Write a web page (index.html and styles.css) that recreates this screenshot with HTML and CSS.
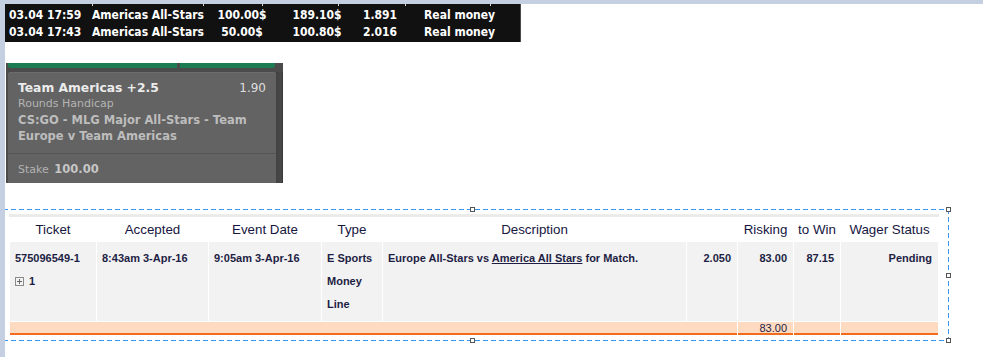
FILE: index.html
```html
<!DOCTYPE html>
<html>

<head>
  <meta charset="utf-8" />
  <title>Wager editor</title>
  <link rel="stylesheet" href="styles.css">
</head>

<body>
  <div class="editor">
    <div class="historial">
      <div class="cut"></div>
      <div class="fila">
        <span class="fecha">03.04 17:59</span>
        <span class="equipo">Americas All-Stars</span>
        <span class="monto">100.00$</span>
        <span class="ganancia">189.10$</span>
        <span class="cuota">1.891</span>
        <span class="tipo">Real money</span>
      </div>
      <div class="fila">
        <span class="fecha">03.04 17:43</span>
        <span class="equipo">Americas All-Stars</span>
        <span class="monto">50.00$</span>
        <span class="ganancia">100.80$</span>
        <span class="cuota">2.016</span>
        <span class="tipo">Real money</span>
      </div>
    </div>

    <div class="boleto">
      <div class="tabs"></div>
      <div class="boleto-body">
        <div class="card">
          <div class="card-info">
            <div class="card-titulo"><span>Team Americas +2.5</span><span class="odds">1.90</span></div>
            <div class="mercado">Rounds Handicap</div>
            <div class="evento">CS:GO - MLG Major All-Stars - Team Europe v Team Americas</div>
          </div>
          <div class="stake">Stake <b>100.00</b></div>
        </div>
        <div class="scroll"></div>
      </div>
    </div>

    <div class="seleccion">
      <span class="handle h-tl"></span>
      <span class="handle h-tm"></span>
      <span class="handle h-tr"></span>
      <span class="handle h-ml"></span>
      <span class="handle h-mr"></span>
      <span class="handle h-bl"></span>
      <span class="handle h-bm"></span>
      <span class="handle h-br"></span>
      <table class="wager">
        <colgroup>
          <col class="c-ticket">
          <col class="c-accepted">
          <col class="c-event">
          <col class="c-type">
          <col class="c-desc">
          <col class="c-odds">
          <col class="c-risk">
          <col class="c-win">
          <col class="c-status">
        </colgroup>
        <thead>
          <tr>
            <th>Ticket</th>
            <th>Accepted</th>
            <th>Event Date</th>
            <th>Type</th>
            <th>Description</th>
            <th></th>
            <th>Risking</th>
            <th>to Win</th>
            <th>Wager Status</th>
          </tr>
        </thead>
        <tbody>
          <tr class="wager-row">
            <td>575096549-1<br><svg class="expand" width="9" height="9" viewBox="0 0 9 9"><rect x="0.5" y="0.5" width="8" height="8" fill="none" stroke="#8a8a8a" /><path d="M2 4.5h5M4.5 2v5" stroke="#666" /></svg> 1</td>
            <td>8:43am 3-Apr-16</td>
            <td>9:05am 3-Apr-16</td>
            <td>E Sports Money Line</td>
            <td>Europe All-Stars vs <u>America All Stars</u> for Match.</td>
            <td class="num">2.050</td>
            <td class="num">83.00</td>
            <td class="num">87.15</td>
            <td class="num">Pending</td>
          </tr>
          <tr class="total-row">
            <td colspan="6"></td>
            <td class="num">83.00</td>
            <td></td>
            <td></td>
          </tr>
        </tbody>
      </table>
    </div>
  </div>
</body>

</html>
```

FILE: styles.css
```css
body {
  margin: 0;
  background: #fff;
}

.editor {
  box-sizing: border-box;
  height: 357px;
  border-top: 4px solid #c5cfe2;
  border-left: 5px solid #c5cfe2;
  overflow: hidden;
}

/* captura del historial */
.historial {
  width: 515px;
  height: 38px;
  background: #111;
  border-right: 1px solid #4a4a4a;
  color: #fff;
  font-family: "DejaVu Sans Condensed", "DejaVu Sans", sans-serif;
  font-stretch: condensed;
  font-weight: bold;
  font-size: 12px;
}

.cut {
  height: 3px;
  background:
    linear-gradient(#ddd, #ddd) 87px 0 / 1px 2px no-repeat,
    linear-gradient(#ddd, #ddd) 198px 0 / 1px 2px no-repeat,
    linear-gradient(#ddd, #ddd) 257px 0 / 1px 2px no-repeat,
    linear-gradient(#ddd, #ddd) 333px 0 / 1px 2px no-repeat,
    linear-gradient(#ddd, #ddd) 400px 0 / 1px 2px no-repeat,
    linear-gradient(#ddd, #ddd) 485px 0 / 1px 2px no-repeat;
}

.fila {
  display: grid;
  grid-template-columns: 87px 118px 64px 86px 40px 1fr;
  height: 17px;
  line-height: 17px;
  white-space: nowrap;
}

.fecha {
  padding-left: 4px;
}

.monto,
.ganancia,
.cuota {
  text-align: center;
}

.tipo {
  padding-left: 24px;
}

/* boleto de apuesta */
.boleto {
  width: 277px;
  height: 120px;
  margin: 21px 0 0 1px;
  background: #4b4b4b;
  display: flex;
  flex-direction: column;
  overflow: hidden;
  font-family: "DejaVu Sans", sans-serif;
}

.tabs {
  flex: 0 0 5px;
  margin: 0 8px 0 2px;
  border-radius: 0 0 3px 3px;
  background: linear-gradient(90deg, #1c7d53 0 169px, #4b4b4b 169px 172px, #1c7d53 172px);
}

.boleto-body {
  flex: 1;
  min-height: 0;
  display: flex;
  margin-top: 4px;
  padding-left: 2px;
}

.card {
  width: 268px;
  background: #636363;
  border-radius: 3px 3px 0 0;
  box-shadow: inset 0 1px 0 #6d6d6d;
}

.card-info {
  padding: 8px 10px 9px;
  border-bottom: 1px solid #545454;
  line-height: 16px;
}

.card-titulo {
  display: flex;
  justify-content: space-between;
  color: #ececec;
  font-size: 12.3px;
  font-weight: bold;
}

.odds {
  font-weight: normal;
  font-size: 12px;
  color: #dedede;
}

.mercado {
  color: #b4b4b4;
  font-size: 11px;
}

.evento {
  color: #bdbdbd;
  font-size: 11.5px;
  font-weight: bold;
}

.stake {
  padding: 7px 10px;
  line-height: 16px;
  color: #b2b2b2;
  font-size: 11px;
}

.stake b {
  color: #c6c6c6;
  font-size: 11.5px;
  margin-left: 2px;
}

.scroll {
  flex: 1;
  background: #474747;
  border-left: 3px solid #444;
  border-right: 1px solid #3a3a3a;
}

/* tabla seleccionada */
.seleccion {
  position: relative;
  width: 954px;
  margin: 26px 0 0 -10px;
  padding: 5px 0 5px 14px;
  box-sizing: border-box;
  background:
    repeating-linear-gradient(90deg, #3a95f2 0 5px, transparent 5px 8px) left top / 100% 1px no-repeat,
    repeating-linear-gradient(90deg, #3a95f2 0 5px, transparent 5px 8px) left bottom / 100% 1px no-repeat,
    repeating-linear-gradient(180deg, #3a95f2 0 5px, transparent 5px 8px) right top / 1px 100% no-repeat,
    repeating-linear-gradient(180deg, #3a95f2 0 5px, transparent 5px 8px) left top / 1px 100% no-repeat;
}

.handle {
  position: absolute;
  width: 5px;
  height: 5px;
  box-sizing: border-box;
  border: 1px solid #555;
  background: #fff;
}

.h-tl,
.h-tm,
.h-tr {
  top: -2px;
}

.h-ml,
.h-mr {
  top: calc(50% - 2px);
}

.h-bl,
.h-bm,
.h-br {
  bottom: -2px;
}

.h-tl,
.h-ml,
.h-bl {
  left: -2px;
}

.h-tm,
.h-bm {
  left: calc(50% - 2px);
}

.h-tr,
.h-mr,
.h-br {
  right: -2px;
}

.wager {
  width: 930px;
  table-layout: fixed;
  border-collapse: separate;
  border-spacing: 1px;
  border-top: 3px solid #ebebeb;
  font-family: "Liberation Sans", Arial, sans-serif;
  color: #1e1e44;
}

.c-ticket { width: 86px; }
.c-accepted { width: 111px; }
.c-event { width: 112px; }
.c-type { width: 60px; }
.c-desc { width: 303px; }
.c-odds { width: 50px; }
.c-risk { width: 55px; }
.c-win { width: 46px; }
.c-status { width: 97px; }

.wager th {
  height: 23px;
  padding: 0;
  font-size: 13.33px;
  font-weight: normal;
  color: #16163f;
  text-align: center;
  white-space: nowrap;
}

.wager-row td {
  height: 69px;
  padding: 5px 6px 5px 5px;
  background: #f2f2f2;
  vertical-align: top;
  font-size: 11px;
  font-weight: bold;
  line-height: 23px;
}

.wager-row td.num {
  text-align: right;
}

.wager-row u {
  text-decoration: underline;
}

.expand {
  vertical-align: -1px;
  margin-right: 2px;
}

.total-row td {
  height: 10px;
  padding: 1px 6px 0 0;
  background: #fedac0;
  border-bottom: 2px solid #f26c1e;
  font-size: 11px;
  line-height: 10px;
  text-align: right;
}
```
